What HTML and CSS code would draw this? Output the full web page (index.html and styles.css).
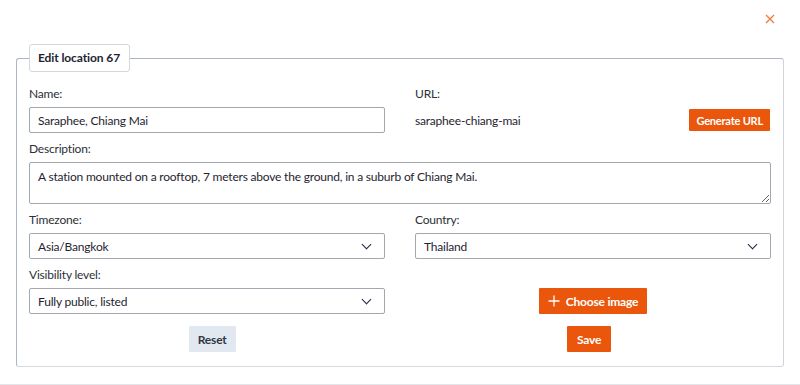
FILE: index.html
```html
<!DOCTYPE html>
<html lang="en">
<head>
    <meta charset="UTF-8">
    <title>Edit location 67</title>
    <link rel="stylesheet" href="styles.css">
</head>
<body>

<div class="modal">
    <div class="modal-top">
        <button class="close-btn" aria-label="Close">
            <svg width="10" height="10" viewBox="0 0 10 10"><path d="M1 1 L9 9 M9 1 L1 9" stroke="#f07a3a" stroke-width="1.3" fill="none"/></svg>
        </button>
    </div>

    <fieldset class="location-form">
        <legend>Edit location 67</legend>

        <div class="grid">
            <div class="field">
                <label>Name:</label>
                <input type="text" value="Saraphee, Chiang Mai">
            </div>
            <div class="field">
                <label>URL:</label>
                <div class="url-row">
                    <span>saraphee-chiang-mai</span>
                    <button class="btn btn-orange btn-small">Generate URL</button>
                </div>
            </div>

            <div class="field wide">
                <label>Description:</label>
                <textarea rows="2">A station mounted on a rooftop, 7 meters above the ground, in a suburb of Chiang Mai.</textarea>
            </div>

            <div class="field">
                <label>Timezone:</label>
                <div class="select">Asia/Bangkok <span class="chev"></span></div>
            </div>
            <div class="field">
                <label>Country:</label>
                <div class="select">Thailand <span class="chev"></span></div>
            </div>

            <div class="field">
                <label>Visibility level:</label>
                <div class="select">Fully public, listed <span class="chev"></span></div>
            </div>
            <div class="field image-cell">
                <button class="btn btn-orange">
                    <svg width="12" height="12" viewBox="0 0 12 12"><path d="M6 0.5 V11.5 M0.5 6 H11.5" stroke="#fff" stroke-width="1.3"/></svg>
                    Choose image
                </button>
            </div>
        </div>

        <div class="actions">
            <button class="btn btn-gray">Reset</button>
            <button class="btn btn-orange btn-save">Save</button>
        </div>
    </fieldset>

    <div class="modal-footer"></div>
</div>

</body>
</html>
```

FILE: styles.css
```css
* {
    margin: 0;
    padding: 0;
    box-sizing: border-box;
    font-family: 'Lato', sans-serif;
    letter-spacing: -0.2px;
}
body {
    background: #fff;
    color: #222;
    font-size: 12px;
}
.modal {
    width: 800px;
    height: 385px;
    padding: 8px 16px 0;
    display: flex;
    flex-direction: column;
}
.modal-top {
    height: 36px;
    display: flex;
    justify-content: flex-end;
}
.close-btn {
    background: none;
    border: none;
    width: 20px;
    height: 22px;
    margin-right: 4px;
    display: flex;
    align-items: center;
    justify-content: center;
}
.location-form {
    border: 1px solid #aeb6c4;
    border-right-color: #cfd3da;
    border-bottom-color: #d6d9df;
    border-radius: 3px;
    padding: 0 12px 12px;
    height: 323px;
}
.location-form legend {
    border: 1px solid #d3d7de;
    border-radius: 3px;
    padding: 0 9px 0 8px;
    line-height: 26px;
    font-weight: bold;
    color: #1d2430;
    letter-spacing: -0.1px;
}
.grid {
    display: grid;
    grid-template-columns: 1fr 1fr;
    column-gap: 30px;
    row-gap: 8px;
    margin-top: 14px;
}
.field {
    display: flex;
    flex-direction: column;
}
.field.wide {
    grid-column: 1 / 3;
}
.field label {
    line-height: 16px;
    margin-bottom: 5px;
    color: #2b2f36;
}
.field input,
.field textarea,
.select {
    font-size: 12px;
    color: #1f2430;
    border: 1px solid #a3a8b0;
    border-radius: 2px;
    padding: 0 8px;
    background: #fff;
}
.field input,
.select {
    height: 26px;
}
.field textarea {
    height: 42px;
    padding-top: 6px;
    resize: vertical;
    line-height: 16px;
}
.select {
    display: flex;
    align-items: center;
    justify-content: space-between;
}
.chev {
    width: 7px;
    height: 7px;
    border-right: 1.4px solid #1c2640;
    border-bottom: 1.4px solid #1c2640;
    transform: rotate(45deg);
    margin: -4px 6px 0 0;
}
.url-row {
    height: 26px;
    display: flex;
    align-items: center;
    justify-content: space-between;
    padding-right: 1px;
    color: #1f2430;
}
.image-cell {
    justify-content: flex-end;
    align-items: center;
}
.btn {
    border: none;
    border-radius: 1px;
    font-weight: bold;
    font-size: 12px;
    height: 26px;
    padding: 0 9px;
    display: inline-flex;
    align-items: center;
    gap: 6px;
    cursor: pointer;
}
.btn-orange {
    background: #e9560c;
    color: #fff;
}
.btn-small {
    height: 22px;
    font-size: 11px;
    padding: 0 7px;
}
.btn-save {
    padding: 0 10px;
}
.btn-gray {
    background: #e2e8f0;
    color: #2f3744;
}
.actions {
    display: flex;
    justify-content: space-around;
    margin: 12px -6px 0;
}
.modal-footer {
    margin: auto -16px 0;
    border-top: 1px solid #e3e5e8;
    height: 1px;
}
```
